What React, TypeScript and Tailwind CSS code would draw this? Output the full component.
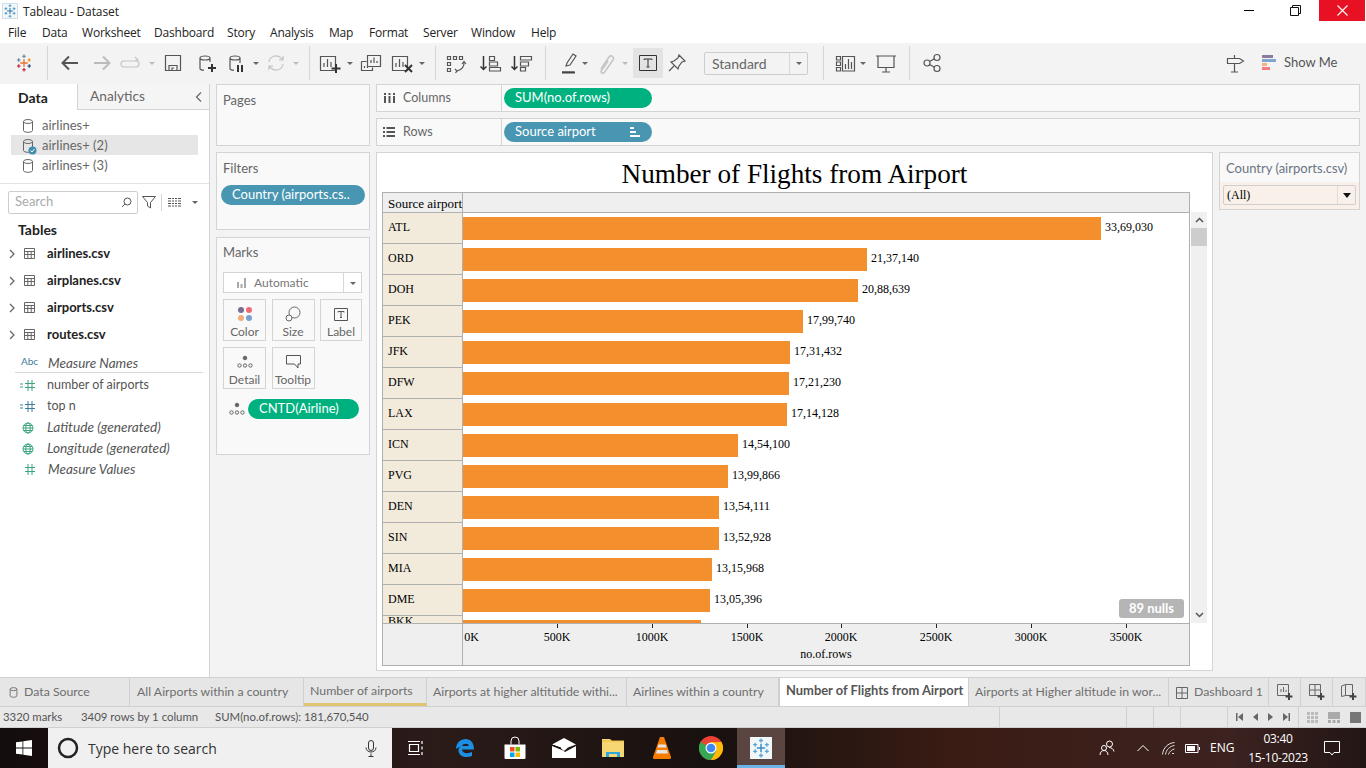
import React from "react";

const UI = "font-['Lato','Open_Sans',sans-serif]";
const bars: [string, number, string][] = [
  ["ATL", 3369030, "33,69,030"],
  ["ORD", 2137140, "21,37,140"],
  ["DOH", 2088639, "20,88,639"],
  ["PEK", 1799740, "17,99,740"],
  ["JFK", 1731432, "17,31,432"],
  ["DFW", 1721230, "17,21,230"],
  ["LAX", 1714128, "17,14,128"],
  ["ICN", 1454100, "14,54,100"],
  ["PVG", 1399866, "13,99,866"],
  ["DEN", 1354111, "13,54,111"],
  ["SIN", 1352928, "13,52,928"],
  ["MIA", 1315968, "13,15,968"],
  ["DME", 1305396, "13,05,396"],
  ["BKK", 1260000, ""],
];
const px = (v: number) => Math.floor((v / 3500000) * 663);

function Ico({ children, w = 24, h = 24, className = "" }: { children: React.ReactNode; w?: number; h?: number; className?: string }) {
  return (
    <svg width={w} height={h} viewBox={`0 0 ${w} ${h}`} fill="none" stroke="#555" strokeWidth="1.2" className={`shrink-0 ${className}`}>
      {children}
    </svg>
  );
}
const Drop = ({ c = "#666", className = "" }: { c?: string; className?: string }) => (
  <svg width="8" height="24" viewBox="0 0 8 24" className={`shrink-0 ${className}`}><path d="M1 11h6l-3 3z" fill={c} /></svg>
);
const Sep = ({ className = "" }: { className?: string }) => <div className={`w-px h-[34px] bg-[#d6d6d6] shrink-0 ${className}`} />;

const Cross = ({ x, y, s, c, w = 1.6 }: { x: number; y: number; s: number; c: string; w?: number }) => (
  <path d={`M${x - s} ${y}H${x + s}M${x} ${y - s}V${y + s}`} stroke={c} strokeWidth={w} fill="none" />
);
const Snow = ({ size = 18, colors }: { size?: number; colors: string[] }) => (
  <svg width={size} height={size} viewBox="0 0 24 24" className="shrink-0">
    <Cross x={12} y={12} s={5} c={colors[0]} w={1.8} />
    <Cross x={5} y={8} s={2.4} c={colors[1]} />
    <Cross x={19} y={8} s={2.4} c={colors[2]} />
    <Cross x={5} y={16} s={2.4} c={colors[3]} />
    <Cross x={19} y={16} s={2.4} c={colors[4]} />
    <Cross x={12} y={3} s={2.4} c={colors[1]} />
    <Cross x={12} y={21} s={2.4} c={colors[3]} />
  </svg>
);
const DB = ({ c = "#666", className = "" }: { c?: string; className?: string }) => (
  <svg width="12" height="14" viewBox="0 0 12 14" fill="none" stroke={c} className={`shrink-0 ${className}`}>
    <ellipse cx="6" cy="2.5" rx="4.5" ry="2" />
    <path d="M1.5 2.5v9c0 1 2 1.8 4.5 1.8s4.5-.8 4.5-1.8v-9" />
  </svg>
);
const TableIco = () => (
  <svg width="11" height="11" viewBox="0 0 11 11" fill="none" stroke="#666" className="shrink-0">
    <path d="M.5.5h10v10H.5zM.5 3.5h10M.5 6.5h10M3.8 3.5v7M7.2 3.5v7" />
  </svg>
);
const Chev = () => (
  <svg width="6" height="10" viewBox="0 0 6 10" fill="none" stroke="#666" strokeWidth="1.3" className="shrink-0"><path d="M1 1l4 4-4 4" /></svg>
);
const Globe = () => (
  <svg width="12" height="12" viewBox="0 0 12 12" fill="none" stroke="#3ba47d" className="shrink-0">
    <circle cx="6" cy="6" r="5" /><ellipse cx="6" cy="6" rx="2.2" ry="5" /><path d="M1 6h10M1.7 3.5h8.6M1.7 8.5h8.6" />
  </svg>
);
const Hash = ({ c = "#3ba47d", pre = false }: { c?: string; pre?: boolean }) => (
  <svg width="16" height="11" viewBox="0 0 16 11" fill="none" stroke={c} className="shrink-0">
    {pre && <path d="M0 4h3M0 7h3" />}
    <path d="M5 3.5h10M5 7.5h10M8 0v11M12 0v11" />
  </svg>
);
const Pill = ({ color, className = "", children }: { color: string; className?: string; children: React.ReactNode }) => (
  <div className={`h-5 rounded-[10px] text-white flex items-center text-[13px] ${color} ${className}`}>{children}</div>
);
const MarkCard = ({ icon, label }: { icon: React.ReactNode; label: string }) => (
  <div className="h-[42px] border border-[#d4d4d4] flex flex-col items-center pt-[5px] text-[12px] text-[#666]">
    <div className="h-[18px] flex items-center">{icon}</div>
    <div className="leading-[15px] mt-[1px]">{label}</div>
  </div>
);
const Dots = () => (
  <svg width="16" height="14" viewBox="0 0 16 14" fill="none" stroke="#666" className="shrink-0">
    <circle cx="8" cy="3" r="1.8" fill="#666" /><circle cx="2.5" cy="10.5" r="1.7" /><circle cx="8" cy="10.5" r="1.7" /><circle cx="13.5" cy="10.5" r="1.7" />
  </svg>
);
const Tab = ({ w, children, className = "" }: { w: string; children: React.ReactNode; className?: string }) => (
  <div className={`${w} h-full shrink-0 border-r border-[#d0d0d0] flex items-center whitespace-nowrap overflow-hidden ${className}`}>{children}</div>
);
const NewTab = ({ kind, w }: { kind: number; w: string }) => (
  <div className={`${w} h-full border-r border-[#d0d0d0] flex items-center justify-center shrink-0`}>
    <svg width="18" height="18" viewBox="0 0 18 18" fill="none" stroke="#666">
      {kind === 0 && <path d="M1.5 1.5h11v11h-11zM5 9V6M7.5 9V4M10 9V7" />}
      {kind === 1 && <path d="M1.5 1.5h11v11h-11zM7 1.5v11M1.5 7h11" />}
      {kind === 2 && <path d="M1.5 3l4-1.5v11l-4 1zM5.5 1.5h7v11h-7" />}
      <path d="M13 10v7M9.5 13.5h7" stroke="#444" strokeWidth="2" />
    </svg>
  </div>
);
const TaskSlot = ({ w = "w-[49px]", className = "", children }: { w?: string; className?: string; children: React.ReactNode }) => (
  <div className={`${w} h-full shrink-0 flex items-center justify-center ${className}`}>{children}</div>
);

export default function App() {
  return (
    <div className={`w-[1366px] h-[768px] overflow-hidden flex flex-col bg-white text-[#555] ${UI}`}>
      {/* title bar */}
      <div className="h-[22px] flex items-start shrink-0 bg-white">
        <div className="ml-[2px] mt-[3px] w-[16px] h-[16px] border border-[#cfe0ea] bg-[#f2f7fa] flex items-center justify-center">
          <Snow size={14} colors={["#2f78a8", "#4d94bd", "#4d94bd", "#4d94bd", "#4d94bd"]} />
        </div>
        <div className="ml-[5px] mt-[3px] text-[12px] leading-[17px] text-[#222] font-['Open_Sans',sans-serif] tracking-[-0.1px]">Tableau - Dataset</div>
        <div className="flex-1" />
        <div className="w-[46px] h-[21px] flex items-center justify-center"><div className="w-[10px] h-px bg-black" /></div>
        <div className="w-[46px] h-[21px] flex items-center justify-center">
          <svg width="11" height="11" viewBox="0 0 11 11" fill="none" stroke="#111"><path d="M.5 2.5h8v8h-8zM2.5 2.5v-2h8v8h-2" /></svg>
        </div>
        <div className="w-[46px] h-[21px] ml-[1px] mr-[1px] bg-[#e81123] flex items-center justify-center">
          <svg width="11" height="11" viewBox="0 0 11 11" stroke="#fff" strokeWidth="1.1"><path d="M.5.5l10 10M10.500.5l-10 10" /></svg>
        </div>
      </div>
      {/* menu */}
      <div className="h-[21px] flex items-center pl-[8px] text-[12px] text-[#222] shrink-0 font-['Open_Sans',sans-serif] tracking-[-0.2px]">
        {[["File", "w-[34px]"], ["Data", "w-[40px]"], ["Worksheet", "w-[72px]"], ["Dashboard", "w-[73px]"], ["Story", "w-[43px]"], ["Analysis", "w-[59px]"], ["Map", "w-[40px]"], ["Format", "w-[54px]"], ["Server", "w-[48px]"], ["Window", "w-[60px]"], ["Help", "w-[40px]"]].map(([t, w]) => (
          <div key={t} className={w}>{t}</div>
        ))}
      </div>
      {/* toolbar */}
      <div className="h-[41px] bg-[#f3f3f3] flex items-center shrink-0 pb-[1px]">
        <div className="ml-[12px] w-[24px] flex justify-center"><Snow size={18} colors={["#e8762b", "#5b879b", "#eb912b", "#c72037", "#1f447a"]} /></div>
        <Sep className="ml-[11px]" />
        <Ico className="ml-[10px]"><path d="M20 12H5M11 5.500L4.500 12l6.500 6.500" stroke="#555" strokeWidth="2" /></Ico>
        <Ico className="ml-[8px]"><path d="M4 12h15M13 5.500l6.500 6.500-6.500 6.500" stroke="#bbb" strokeWidth="2" /></Ico>
        <Ico className="ml-[6px]"><path d="M4 10h12a3 3 0 0 1 0 6H4a2 2 0 0 1 0-6M15 6l3 3-3 1" stroke="#c4c4c4" /></Ico>
        <Drop c="#bbb" className="ml-[4px]" />
        <Ico className="ml-[5px]"><path d="M4.500 4.500h15v15h-15zM8 19.500v-5h8v5M11 19.500v-2.500h2" /></Ico>
        <Ico className="ml-[9px]"><path d="M6 7v10.500c0 1 1.500 1.700 4 1.700M6 7c0-1.200 2.500-2 5-2s5 .8 5 2-2.500 2-5 2-5-.8-5-2zM16 7v4" /><path d="M18 13v8M14 17h8" stroke="#333" strokeWidth="2" /></Ico>
        <Ico className="ml-[6px]"><path d="M6 7v10.500c0 1 1.500 1.700 4 1.700M6 7c0-1.200 2.500-2 5-2s5 .8 5 2-2.500 2-5 2-5-.8-5-2zM16 7v5" /><path d="M14 14v7M18 14v7" stroke="#333" strokeWidth="2" /></Ico>
        <Drop className="ml-[4px]" />
        <Ico className="ml-[4px]"><path d="M5 11a7 7 0 0 1 12-4l2 2M19 13a7 7 0 0 1-12 4l-2-2M19 5v4h-4M5 19v-4h4" stroke="#c4c4c4" /></Ico>
        <Drop c="#bbb" className="ml-[4px]" />
        <Sep className="ml-[9px]" />
        <Ico className="ml-[8px]"><path d="M2.500 5.500h15v14h-15zM6 16v-4M9.500 16V8M13 16v-5" /><path d="M18 13v9M13.500 17.500h9" stroke="#333" strokeWidth="2" /></Ico>
        <Drop className="ml-[4px]" />
        <Ico className="ml-[5px]"><path d="M8.500 4.500h13v11h-13zM12 12V9M15 12V6.500M18 12v-2M2.500 10.500h5M2.500 10.500v9h11v-3M5.500 17v-2M8.500 17v-2" /></Ico>
        <Ico className="ml-[7px]"><path d="M2.500 5.500h15v14h-15zM6 16v-4M9.500 16V8M13 16v-5" /><path d="M15 14l7 7M22 14l-7 7" stroke="#333" strokeWidth="2" /></Ico>
        <Drop className="ml-[4px]" />
        <Sep className="ml-[9px]" />
        <Ico className="ml-[8px]"><path d="M3.500 5.500h3v3h-3zM9.500 5.500h3v3h-3zM15.500 5.500h3v3h-3zM3.500 11.500h3v3h-3zM3.500 17.500h3v3h-3zM20 11c.5 4-2 8-7 9" /><path d="M18 13l2-2.500 2 2.500M11 18l2 2-1.500 2" /></Ico>
        <Ico className="ml-[10px]"><path d="M5.500 5v13M2.500 15.500l3 3 3-3" strokeWidth="1.500" stroke="#333" /><path d="M11.500 5.500h5v4h-5zM11.500 11h8v4h-8zM11.500 16.500h11v3.500h-11z" /></Ico>
        <Ico className="ml-[7px]"><path d="M5.500 5v13M2.500 15.500l3 3 3-3" strokeWidth="1.500" stroke="#333" /><path d="M11.500 5.500h11v3.500h-11zM11.500 11h8v4h-8zM11.500 16.500h5V20h-5z" /></Ico>
        <Sep className="ml-[12px]" />
        <Ico className="ml-[10px]"><path d="M10 15l1-3 6-9 3 2-6 9zM6 21h12" /><path d="M6 21.500h13" stroke="#444" strokeWidth="2" /></Ico>
        <Drop className="ml-[1px]" />
        <Ico className="ml-[4px]"><path d="M8 18l8-12a2.500 2.500 0 0 1 4 3l-9 13a2 2 0 0 1-3-2l7-10" stroke="#c4c4c4" strokeWidth="1.500" /></Ico>
        <Drop c="#bbb" className="ml-[4px]" />
        <div className="ml-[4px] w-[30px] h-[30px] bg-[#e3e3e3] flex items-center justify-center shrink-0">
          <svg width="18" height="16" viewBox="0 0 18 16" fill="none" stroke="#333"><path d="M.5.500h17v15H.5zM5 5V4h8v1M9 4v8M7.500 12h3" /></svg>
        </div>
        <Ico className="ml-[2px]"><path d="M14 4l6 6-3 1-3 4-1 3-7-7 3-1 4-3zM9 15l-5 5" /></Ico>
        <div className="ml-[15px] w-[104px] h-[23px] border border-[#cdcdcd] rounded-[2px] flex items-center text-[14px] text-[#666] shrink-0">
          <div className="flex-1 pl-[7px]">Standard</div>
          <div className="w-[18px] h-full border-l border-[#d8d8d8] flex items-center justify-center"><Drop /></div>
        </div>
        <Sep className="ml-[15px]" />
        <Ico className="ml-[10px]"><path d="M2.500 5.500h4v3.500h-4zM2.500 11h4v3.500h-4zM2.500 16.500h4V20h-4zM8.500 5.500h12V20h-12zM11.500 18v-5M14.500 18V8M17.500 18v-7" /></Ico>
        <Drop className="ml-[1px]" />
        <Ico className="ml-[7px]"><path d="M2 5h20M4 5.500v11h16v-11M12 16.500V21M8 21h8" /></Ico>
        <Sep className="ml-[11px]" />
        <Ico className="ml-[10px]"><circle cx="7" cy="12" r="3" /><circle cx="17" cy="6.500" r="3" /><circle cx="17" cy="17.500" r="3" /><path d="M9.500 10.500l5-2.800M9.500 13.500l5 2.800" /></Ico>
        <div className="flex-1" />
        <Ico w={20} h={24} className="mr-[17px]"><path d="M2.500 7.500h12l4 2.500-4 2.500h-12zM9.500 4v3.500M9.500 12.500V21M6 21h7" /></Ico>
        <svg width="15" height="16" viewBox="0 0 15 16" className="shrink-0 mr-[7px]">
          <rect width="11" height="3" fill="#8a7a9e" /><rect y="4" width="14" height="3" fill="#7fa5d0" /><rect y="8" width="5" height="3" fill="#f5b27e" /><rect y="12" width="8" height="3" fill="#f47c85" />
        </svg>
        <div className="text-[13px] w-[53px] whitespace-nowrap text-[#555] mr-[29px]">Show Me</div>
      </div>

      {/* main */}
      <div className="h-[593px] bg-[#f3f3f3] flex shrink-0">
        {/* data pane */}
        <div className="w-[210px] h-full bg-white border-r border-[#d4d4d4] shrink-0 flex flex-col">
          <div className="h-[27px] flex shrink-0 text-[14px] pb-[1px]">
            <div className="w-[77px] flex items-center pl-[18px] font-bold text-[#222]">Data</div>
            <div className="flex-1 flex items-center justify-between pl-[12px] pr-[6px] bg-[#f5f5f5] border-l border-b border-[#d4d4d4] text-[#666]">
              <span className="text-[13.7px]">Analytics</span>
              <svg width="8" height="12" viewBox="0 0 8 12" fill="none" stroke="#666" strokeWidth="1.200"><path d="M6 1.500L1.500 6 6 10.500" /></svg>
            </div>
          </div>
          <div className="h-[73px] border-b border-[#e4e4e4] pt-[4px] shrink-0 text-[13px] text-[#666]">
            <div className="h-5 flex items-center pl-[22px] gap-[8px] pt-[1px]"><DB />airlines+</div>
            <div className="h-5 ml-[11px] mr-[11px] bg-[#e6e6e6] flex items-center pl-[11px] gap-[8px] pt-[1px]">
              <div className="relative flex">
                <DB />
                <svg width="9" height="9" viewBox="0 0 9 9" className="absolute right-[-3px] bottom-[-2px]"><circle cx="4.500" cy="4.500" r="4" fill="#3f8db0" /><path d="M2.500 4.500l1.500 1.500 2.500-3" fill="none" stroke="#fff" /></svg>
              </div>
              airlines+ (2)
            </div>
            <div className="h-5 flex items-center pl-[22px] gap-[8px] pt-[1px]"><DB />airlines+ (3)</div>
          </div>
          <div className="h-[22px] mt-[7px] flex items-center shrink-0">
            <div className="ml-[8px] w-[130px] h-[23px] border border-[#cdcdcd] rounded-[2px] flex items-center justify-between pl-[6px] pr-[5px] text-[13px] text-[#aaa]">
              <span>Search</span>
              <svg width="11" height="11" viewBox="0 0 11 11" fill="none" stroke="#555"><circle cx="6.500" cy="4.500" r="3.500" /><path d="M4 7l-3 3" /></svg>
            </div>
            <svg width="14" height="14" viewBox="0 0 14 14" fill="none" stroke="#555" className="ml-[4px]"><path d="M.5 1.500h13L8.500 7.500v5.500l-3-2V7.500z" /></svg>
            <div className="w-px h-[17px] bg-[#d4d4d4] ml-[5px]" />
            <svg width="13" height="9" viewBox="0 0 13 9" fill="none" stroke="#555" className="ml-[6px]"><path d="M0 .5h13M0 3h13M0 5.500h13M0 8h13" /><path d="M3.500 0v9M6.500 0v9M9.500 0v9" stroke="#fff" /></svg>
            <Drop className="ml-[10px]" />
          </div>
          <div className="ml-[18px] mt-[7px] h-[19px] text-[14px] leading-[20px] font-bold text-[#222] shrink-0">Tables</div>
          <div className="mt-[1px] shrink-0">
            {["airlines.csv", "airplanes.csv", "airports.csv", "routes.csv"].map((t) => (
              <div key={t} className="h-[27px] flex items-center pl-[9px] text-[13px] font-bold text-[#222]">
                <Chev />
                <span className="ml-[9px]"><TableIco /></span>
                <span className="ml-[12px]">{t}</span>
              </div>
            ))}
          </div>
          <div className="ml-[15px] mr-[6px] h-[25px] border-b border-[#d8d8d8] flex items-end text-[13.5px] leading-[18px] italic text-[#555] shrink-0">
            <span className="w-[33px] pl-[6px] pb-[2px] not-italic text-[10px] text-[#3f7d9c]">Abc</span>
            {"Measure Names"}
          </div>
          <div className="text-[12.5px] text-[#555] shrink-0 mt-[2px]">
            <div className="h-[21px] flex items-center pl-[20px] gap-[11px]"><Hash pre />number of airports</div>
            <div className="h-[21px] flex items-center pl-[20px] gap-[11px]"><Hash pre c="#3f7d9c" />top n</div>
            <div className="h-[21px] flex items-center pl-[22px] gap-[13px] italic text-[13.7px]"><Globe />Latitude (generated)</div>
            <div className="h-[21px] flex items-center pl-[22px] gap-[13px] italic text-[13.7px]"><Globe />Longitude (generated)</div>
            <div className="h-[21px] flex items-center pl-[20px] gap-[12px] italic text-[13.5px]"><Hash />Measure Values</div>
          </div>
        </div>

        {/* cards column */}
        <div className="w-[154px] ml-[6px] flex flex-col shrink-0 text-[13px] text-[#666]">
          <div className="h-[62px] bg-[#f9f9f9] border border-[#d4d4d4] pl-[6px] pt-[6px]">Pages</div>
          <div className="h-[78px] mt-[6px] bg-[#f9f9f9] border border-[#d4d4d4] pt-[7px]">
            <div className="pl-[6px] leading-[16px]">Filters</div>
            <Pill color="bg-[#4996b2]" className="ml-[4px] mt-[9px] w-[144px] pl-[11px]">Country (airports.cs..</Pill>
          </div>
          <div className="h-[218px] mt-[7px] bg-[#f9f9f9] border border-[#d4d4d4] pt-[6px]">
            <div className="pl-[6px] leading-[16px]">Marks</div>
            <div className="ml-[6px] mt-[12px] w-[139px] h-[21px] border border-[#d4d4d4] bg-white flex items-center text-[12px] text-[#777]">
              <svg width="11" height="10" viewBox="0 0 11 10" className="ml-[12px] mr-[7px]"><path d="M1 4h2v6H1zM4.500 6h2v4h-2zM8 0h2v10H8z" fill="#aaa" /></svg>
              <span className="flex-1">Automatic</span>
              <div className="w-[18px] h-full border-l border-[#d8d8d8] flex items-center justify-center"><Drop /></div>
            </div>
            <div className="ml-[6px] mt-[6px] w-[139px] grid grid-cols-[43px_43px_42px] gap-x-[5.5px] gap-y-[6px]">
              <MarkCard label="Color" icon={<svg width="16" height="16" viewBox="0 0 16 16"><circle cx="4" cy="4" r="3" fill="#7a6b93" /><circle cx="12" cy="4" r="3" fill="#f16a77" /><circle cx="4" cy="12" r="3" fill="#f4ab7a" /><circle cx="12" cy="12" r="3" fill="#78a0d2" /></svg>} />
              <MarkCard label="Size" icon={<svg width="16" height="16" viewBox="0 0 16 16" fill="none" stroke="#666"><circle cx="9.500" cy="6.500" r="5.500" /><circle cx="4" cy="12" r="3" fill="#f9f9f9" /></svg>} />
              <MarkCard label="Label" icon={<svg width="14" height="13" viewBox="0 0 14 13" fill="none" stroke="#555"><path d="M.5.5h13v12H.5zM4 4.500v-1h6v1M7 3.500v6M6 9.500h2" /></svg>} />
              <MarkCard label="Detail" icon={<Dots />} />
              <MarkCard label="Tooltip" icon={<svg width="15" height="14" viewBox="0 0 15 14" fill="none" stroke="#555"><path d="M.5.500h14v8.500h-2.500v4L8.500 9H.5z" /></svg>} />
            </div>
            <div className="ml-[12px] mt-[10px] flex items-center gap-[3px]">
              <Dots />
              <Pill color="bg-[#00b180]" className="w-[111px] pl-[11px]">CNTD(Airline)</Pill>
            </div>
          </div>
        </div>

        {/* right */}
        <div className="w-[984px] ml-[6px] flex flex-col shrink-0 text-[12.5px] text-[#666]">
          <div className="h-[28px] bg-[#f9f9f9] border border-[#d4d4d4] flex items-center">
            <div className="w-[125px] h-full border-r border-[#d4d4d4] flex items-center pl-[7px] gap-[8px]">
              <svg width="11" height="10" viewBox="0 0 11 10" fill="#555"><path d="M0 0h2v2H0zM4.500 0h2v2h-2zM9 0h2v2H9zM0 3h2v7H0zM4.500 3h2v7h-2zM9 3h2v7H9z" /></svg>
              Columns
            </div>
            <Pill color="bg-[#00b180]" className="ml-[2px] w-[148px] pl-[11px]">SUM(no.of.rows)</Pill>
          </div>
          <div className="h-[28px] mt-[6px] bg-[#f9f9f9] border border-[#d4d4d4] flex items-center">
            <div className="w-[125px] h-full border-r border-[#d4d4d4] flex items-center pl-[6px] gap-[8px]">
              <svg width="12" height="10" viewBox="0 0 12 10" fill="#555"><path d="M0 0h2v2H0zM3.500 0H12v2H3.500zM0 4h2v2H0zM3.500 4H12v2H3.500zM0 8h2v2H0zM3.500 8H12v2H3.500z" /></svg>
              Rows
            </div>
            <Pill color="bg-[#4996b2]" className="ml-[2px] w-[148px] pl-[11px] justify-between pr-[12px]">
              Source airport
              <svg width="10" height="10" viewBox="0 0 10 10" fill="#fff"><path d="M0 0h4v2H0zM0 4h6v2H0zM0 8h10v2H0z" /></svg>
            </Pill>
          </div>
          <div className="flex mt-[6px] items-start">
            {/* view */}
            <div className="w-[837px] h-[519px] bg-white border border-[#d4d4d4] flex flex-col font-['Liberation_Serif',serif] text-black shrink-0">
              <div className="h-[39px] shrink-0 text-center text-[27.2px] leading-[43px]">Number of Flights from Airport</div>
              <div className="flex ml-[5px]">
                <div className="relative w-[808px] h-[474px] border border-[#b0b0b0] flex flex-col text-[12px] shrink-0">
                  <div className="h-[20px] flex bg-[#efefef] border-b border-[#b0b0b0] shrink-0">
                    <div className="w-[80px] border-r border-[#b0b0b0] pl-[5px] leading-[22px] whitespace-nowrap text-[13px]">Source airport</div>
                  </div>
                  <div className="h-[410px] overflow-hidden shrink-0">
                    {bars.map(([code, v, label]) => (
                      <div key={code} className="h-[31px] flex">
                        <div className={`w-[80px] h-full shrink-0 bg-[#f2ebdc] border-r border-b border-[#b0b0b0] pl-[5px] ${code === "BKK" ? "leading-[11px]" : "leading-[28px]"}`}>{code}</div>
                        <div className="flex-1 flex items-center pb-[4px] pt-[3px]">
                          <div className="h-[23px] bg-[#f48f2d]" style={{ width: px(v) }} />
                          <span className="ml-[4px] leading-[21px] mb-[2px]">{label}</span>
                        </div>
                      </div>
                    ))}
                  </div>
                  <div className="flex-1 flex bg-[#efefef] border-t border-[#b0b0b0]">
                    <div className="w-[80px] border-r border-[#b0b0b0] shrink-0" />
                    <div className="relative flex-1">
                      {[0, 500, 1000, 1500, 2000, 2500, 3000, 3500].map((k) => (
                        <div key={k} className="absolute top-0 flex flex-col items-center w-0" style={{ left: px(k * 1000) }}>
                          {k > 0 && <div className="w-px h-[4px] bg-[#222] shrink-0" />}
                          <div className={`whitespace-nowrap leading-[14px] ${k > 0 ? "mt-[2px]" : "mt-[6px] ml-[17px]"}`}>{k}K</div>
                        </div>
                      ))}
                      <div className="absolute left-0 right-0 top-[23px] text-center text-[12px] leading-[14px]">no.of.rows</div>
                    </div>
                  </div>
                  <div className={`absolute left-[736px] top-[406px] w-[65px] h-[19px] rounded-[3px] bg-[#b5b5b5] text-white text-[13px] font-bold flex items-center justify-center ${UI}`}>89 nulls</div>
                </div>
                <div className="w-[16px] h-[411px] mt-[20px] ml-[1px] bg-[#f0f0f0] shrink-0 flex flex-col items-center">
                  <svg width="9" height="6" viewBox="0 0 9 6" fill="none" stroke="#555" strokeWidth="1.500" className="mt-[5px]"><path d="M1 5l3.500-3.500L8 5" /></svg>
                  <div className="w-full h-[18px] bg-[#cdcdcd] mt-[5px] shrink-0" />
                  <div className="flex-1" />
                  <svg width="9" height="6" viewBox="0 0 9 6" fill="none" stroke="#555" strokeWidth="1.500" className="mb-[5px]"><path d="M1 1l3.500 3.500L8 1" /></svg>
                </div>
              </div>
            </div>
            {/* filter card */}
            <div className="w-[141px] h-[58px] ml-[6px] bg-[#f9f9f9] border border-[#d4d4d4] flex flex-col shrink-0">
              <div className="h-[29px] pl-[6px] pt-[6px] leading-[18px] text-[13px] text-[#6b7480] shrink-0">Country (airports.csv)</div>
              <div className="flex-1 bg-[#f9f0ea] px-[3px] pt-[3px]">
                <div className="h-[20px] border border-[#cfcfcf] rounded-[2px] flex items-center font-['Liberation_Serif',serif] text-[12px] text-black">
                  <div className="flex-1 pl-[3px]">(All)</div>
                  <div className="w-[18px] h-full border-l border-[#e6dcd6] flex items-center justify-center">
                    <svg width="8" height="5" viewBox="0 0 8 5"><path d="M0 0h8L4 5z" fill="#111" /></svg>
                  </div>
                </div>
              </div>
            </div>
          </div>
        </div>
      </div>

      {/* tabs */}
      <div className="h-[30px] bg-[#e6e6e6] border-y border-[#d0d0d0] flex shrink-0 text-[12.3px] text-[#6e6e6e]">
        <Tab w="w-[130px]" className="pl-[9px] gap-[6px] pt-[1px]"><svg width="9" height="11" viewBox="0 0 12 14" fill="none" stroke="#777" strokeWidth="1.300" className="shrink-0"><ellipse cx="6" cy="2.500" rx="4.500" ry="2" /><path d="M1.500 2.500v9c0 1 2 1.800 4.500 1.800s4.500-.8 4.500-1.800v-9" /></svg>Data Source</Tab>
        <Tab w="w-[174px]" className="pl-[7px] pt-[1px]">All Airports within a country</Tab>
        <Tab w="w-[123px]" className="pl-[6px] pt-[1px] border-b-[3px] border-b-[#e0c36f]">Number of airports</Tab>
        <Tab w="w-[200px]" className="pl-[6px] pt-[1px]">Airports at higher altitutide withi...</Tab>
        <Tab w="w-[152px]" className="pl-[6px] pt-[1px]">Airlines within a country</Tab>
        <Tab w="w-[190px]" className="pl-[6px] bg-white font-bold text-[#555] text-[12.9px] pb-[2px] border-l border-l-[#d0d0d0]">Number of Flights from Airport</Tab>
        <Tab w="w-[200px]" className="pl-[6px] pt-[1px]">Airports at Higher altitude in wor...</Tab>
        <Tab w="w-[100px]" className="pl-[7px] gap-[6px] pt-[1px]">
          <svg width="12" height="12" viewBox="0 0 12 12" fill="none" stroke="#666" className="shrink-0"><path d="M.5.5h11v11H.5zM6 .5v11M.5 6h11" /></svg>
          Dashboard 1
        </Tab>
        <NewTab kind={0} w="w-[32px]" />
        <NewTab kind={1} w="w-[32px]" />
        <NewTab kind={2} w="w-[33px]" />
      </div>
      {/* status */}
      <div className="h-[21px] bg-[#e8e8e8] flex items-center text-[11.4px] text-[#555] shrink-0 border-b border-[#d0d0d0]">
        <div className="w-[81px] pl-[3px]">3320 marks</div>
        <div className="w-[134px]">3409 rows by 1 column</div>
        <div className="w-[784px]">SUM(no.of.rows): 181,670,540</div>
        <div className="w-[127px] h-full border-l border-[#d0d0d0]" />
        <div className="w-[27px] h-full border-l border-[#d0d0d0]" />
        <div className="w-[27px] h-full border-l border-[#d0d0d0]" />
        <div className="w-[47px] h-full border-l border-[#d0d0d0]" />
        <div className="w-[71px] h-full border-l border-[#d0d0d0] flex items-center justify-between px-[8px]">
          <svg width="7" height="8" viewBox="0 0 7 8" fill="#666"><path d="M0 0h1.500v8H0zM7 0v8L2 4z" /></svg>
          <svg width="5" height="8" viewBox="0 0 5 8" fill="#666"><path d="M5 0v8L0 4z" /></svg>
          <svg width="5" height="8" viewBox="0 0 5 8" fill="#666"><path d="M0 0v8l5-4z" /></svg>
          <svg width="7" height="8" viewBox="0 0 7 8" fill="#666"><path d="M5.500 0H7v8H5.500zM0 0v8l5-4z" /></svg>
        </div>
        <div className="flex-1 h-full border-l border-[#d0d0d0] flex items-center gap-[9px] pl-[8px]">
          <svg width="11" height="11" viewBox="0 0 11 11" fill="#bbb"><path d="M0 0h3v3H0zM4 0h3v3H4zM8 0h3v3H8zM0 4h3v3H0zM4 4h3v3H4zM8 4h3v3H8zM0 8h3v3H0zM4 8h3v3H4zM8 8h3v3H8z" /></svg>
          <svg width="12" height="11" viewBox="0 0 12 11" fill="#aaa" className="ml-[1px]"><path d="M0 0h12v7H0zM0 8h3v3H0zM4.500 8h3v3h-3zM9 8h3v3H9z" /></svg>
          <div className="w-[11px] h-[11px] bg-[#777] ml-[1px]" />
        </div>
      </div>

      {/* taskbar */}
      <div className="h-[40px] flex items-center shrink-0 bg-[linear-gradient(90deg,#140d0d_0%,#2b1b19_32%,#17110f_52%,#3a1c14_70%,#3c2220_90%,#221614_100%)] font-['Open_Sans',sans-serif]">
        <TaskSlot w="w-[48px]">
          <svg width="16" height="16" viewBox="0 0 16 16" fill="#fff"><path d="M0 2.300l6.500-.9v6.200H0zM7.300 1.300L16 0v7.600H7.300zM0 8.400h6.500v6.200L0 13.700zM7.300 8.400H16V16l-8.700-1.300z" /></svg>
        </TaskSlot>
        <div className="w-[344px] h-full bg-[#f0f0f0] flex items-center shrink-0">
          <svg width="22" height="22" viewBox="0 0 22 22" fill="none" className="ml-[9px]"><circle cx="11" cy="11" r="9" stroke="#222" strokeWidth="2.500" /></svg>
          <span className="ml-[9px] text-[14px] text-[#333] flex-1">Type here to search</span>
          <svg width="12" height="17" viewBox="0 0 12 17" fill="none" stroke="#333" className="mr-[15px]"><rect x="3.500" y=".5" width="5" height="10" rx="2.500" /><path d="M1 7.500c0 6 10 6 10 0M6 13.500V16M3.500 16.500h5" /></svg>
        </div>
        <TaskSlot w="w-[48px]">
          <svg width="16" height="16" viewBox="0 0 16 16" fill="none" stroke="#fff"><path d="M1.500 4.500h9v7h-9zM0 1.500h12M0 14.500h12M14 1v3M14 6.500v3M14 12v3" strokeWidth="1.200" /></svg>
        </TaskSlot>
        <TaskSlot w="w-[50px]">
          <svg width="20" height="20" viewBox="0 0 20 20"><path d="M1 11C1 4.500 6 1 10.500 1 15.500 1 19 4.500 19 11.500H7c.3 3.500 5 4.800 10 2.500v4c-6 2.500-13 .5-13.500-5-.2-2 .5-3.500 2-4.500C4 9.300 2.300 9.900 1 11zm6.200-3h6.600c0-3-6-3-6.600 0z" fill="#1a8fe3" /></svg>
        </TaskSlot>
        <TaskSlot>
          <svg width="24" height="24" viewBox="0 0 24 24"><path d="M1.500 8.500h21v13.500a1 1 0 0 1-1 1h-19a1 1 0 0 1-1-1z" fill="#fff" /><path d="M8 8.500V5a4 4 0 0 1 8 0v3.500" stroke="#fff" fill="none" /><path d="M7 11h4.500v4.500H7z" fill="#f25022" /><path d="M12.500 11H17v4.500h-4.500z" fill="#7fba00" /><path d="M7 16.500h4.500V21H7z" fill="#00a4ef" /><path d="M12.500 16.500H17V21h-4.500z" fill="#ffb900" /></svg>
        </TaskSlot>
        <TaskSlot>
          <svg width="24" height="20" viewBox="0 0 24 20"><path d="M0 6.500L12 0l12 6.500L16 9.500 12 13 8 9.500z" fill="#fff" /><path d="M0 8v12h24V8L13 14l-2-1.500z" fill="#fff" /><path d="M0 7l9 3" stroke="#111" /></svg>
        </TaskSlot>
        <TaskSlot>
          <svg width="22" height="20" viewBox="0 0 22 20"><path d="M0 1h8l2 2h12v16H0z" fill="#f6d672" /><path d="M0 3h22" stroke="#e8b93e" /><path d="M4 19v-5h14v5h-3v-3H7v3z" fill="#2fa7dd" /></svg>
        </TaskSlot>
        <TaskSlot>
          <svg width="20" height="24" viewBox="0 0 20 24"><path d="M8 1h4l7 20c.3 1-.5 2-1 2H2c-.5 0-1.300-1-1-2z" fill="#f57c00" /><path d="M6.500 8.500h7l1 3h-9zM5 14h10l1 3.500H4z" fill="#e5e5e5" /></svg>
        </TaskSlot>
        <TaskSlot w="w-[50px]">
          <svg width="24" height="24" viewBox="0 0 24 24"><circle cx="12" cy="12" r="12" fill="#ea4335" /><path d="M12 12L1.600 6A12 12 0 0 0 12 24l5.200-9z" fill="#34a853" /><path d="M12 6h10.400A12 12 0 0 1 12 24l5.200-9z" fill="#fbbc05" /><circle cx="12" cy="12" r="5.500" fill="#fff" /><circle cx="12" cy="12" r="4.300" fill="#4285f4" /></svg>
        </TaskSlot>
        <TaskSlot w="w-[48px]" className="ml-[1px] bg-[#5a4540] border-b-[3px] border-[#6cb4e8] pt-[3px]">
          <div className="w-[22px] h-[22px] bg-[#f1f6f9] flex items-center justify-center"><Snow size={20} colors={["#3a8fc7", "#5ba5d4", "#5ba5d4", "#5ba5d4", "#5ba5d4"]} /></div>
        </TaskSlot>
        <div className="flex-1" />
        <svg width="16" height="16" viewBox="0 0 16 16" fill="none" stroke="#fff" className="mr-[22px]"><circle cx="10.500" cy="4" r="3" /><circle cx="5" cy="8" r="2.500" /><path d="M1 15c0-3 2-4.500 4-4.500S9 12 9 15M10 7.500c2.500 0 4.500 1.500 5 4" /></svg>
        <svg width="12" height="8" viewBox="0 0 12 8" fill="none" stroke="#fff" className="mr-[13px]"><path d="M.5 7L6 1.500 11.500 7" /></svg>
        <svg width="13" height="13" viewBox="0 0 13 13" fill="none" stroke="#ddd" className="mr-[10px]"><path d="M.5 12.500C1 6 6 1 12.500.5M3.500 12.500C4 8 8 4 12.500 3.500M6.500 12.500C7 10 9.500 7.500 12.500 7M10 11.500h2" /></svg>
        <svg width="15" height="9" viewBox="0 0 15 9" fill="none" stroke="#fff" className="mr-[10px]"><path d="M.5.5h12.500v8H.5z" /><path d="M2 2h8v5H2z" fill="#fff" stroke="none" /><path d="M14.500 3v3" /></svg>
        <div className="text-[12px] text-white w-[24px] mr-[7px]">ENG</div>
        <div className="w-[74px] whitespace-nowrap text-center text-[12px] text-white leading-[19px] mr-[9px] tracking-[-0.3px]">
          <div>03:40</div>
          <div>15-10-2023</div>
        </div>
        <svg width="16" height="15" viewBox="0 0 16 15" fill="none" stroke="#fff" className="mr-[26px]"><path d="M.5.500h15v11H10l-2 2.500-2-2.500H.5z" /></svg>
      </div>
    </div>
  );
}
